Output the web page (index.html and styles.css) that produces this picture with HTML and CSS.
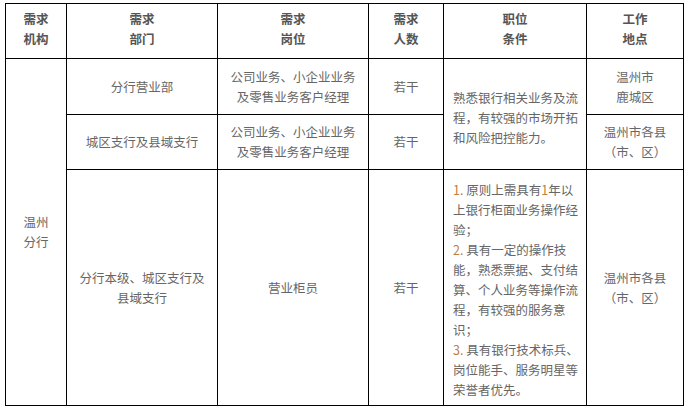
FILE: index.html
```html
<!DOCTYPE html>
<html lang="zh-CN">
<head>
<meta charset="utf-8">
<title>招聘岗位</title>
<link rel="stylesheet" href="styles.css">
</head>
<body>
<table class="jobs">
  <colgroup>
    <col class="c-org">
    <col class="c-dept">
    <col class="c-post">
    <col class="c-num">
    <col class="c-req">
    <col class="c-loc">
  </colgroup>
  <thead>
    <tr class="row-head">
      <th>需求<br>机构</th>
      <th>需求<br>部门</th>
      <th>需求<br>岗位</th>
      <th>需求<br>人数</th>
      <th>职位<br>条件</th>
      <th>工作<br>地点</th>
    </tr>
  </thead>
  <tbody>
    <tr class="row-a">
      <td rowspan="3">温州<br>分行</td>
      <td>分行营业部</td>
      <td>公司业务、小企业业务<br>及零售业务客户经理</td>
      <td>若干</td>
      <td rowspan="2" class="req">熟悉银行相关业务及流<br>程，有较强的市场开拓<br>和风险把控能力。</td>
      <td>温州市<br>鹿城区</td>
    </tr>
    <tr class="row-b">
      <td>城区支行及县域支行</td>
      <td>公司业务、小企业业务<br>及零售业务客户经理</td>
      <td>若干</td>
      <td>温州市各县<br>（市、区）</td>
    </tr>
    <tr class="row-c">
      <td>分行本级、城区支行及<br>县域支行</td>
      <td>营业柜员</td>
      <td>若干</td>
      <td class="req req-list"><span class="num">1.</span> 原则上需具有<span class="num">1</span>年以<br>上银行柜面业务操作经<br>验；<br><span class="num">2.</span> 具有一定的操作技<br>能，熟悉票据、支付结<br>算、个人业务等操作流<br>程，有较强的服务意<br>识；<br><span class="num">3.</span> 具有银行技术标兵、<br>岗位能手、服务明星等<br>荣誉者优先。</td>
      <td>温州市各县<br>（市、区）</td>
    </tr>
  </tbody>
</table>
</body>
</html>
```
FILE: styles.css
```css
html, body {
  margin: 0;
  padding: 0;
  background: #fff;
}
body {
  padding: 3px 0 0 5px;
  font-family: "Noto Sans CJK SC", "Liberation Sans", sans-serif;
  font-size: 12.5px;
  line-height: 20px;
  color: #666;
  text-spacing-trim: space-all;
}
.jobs {
  border-collapse: collapse;
  table-layout: fixed;
  width: 678px;
  border: 1px solid #000;
}
.c-org { width: 61px; }
.c-dept { width: 151px; }
.c-post { width: 151px; }
.c-num { width: 75px; }
.c-req { width: 143px; }
.c-loc { width: 97px; }
.jobs th,
.jobs td {
  border: 1px solid #000;
  padding: 0;
  text-align: center;
  vertical-align: middle;
  white-space: nowrap;
  font-weight: normal;
}
.jobs th {
  font-weight: bold;
  color: #555;
  padding-bottom: 4px;
}
.row-head { height: 55px; }
.row-a { height: 56px; }
.row-b { height: 55px; }
.row-c { height: 236px; }
.jobs td.req {
  text-align: left;
  padding-left: 9px;
  padding-top: 8px;
}
.jobs td.req-list {
  padding-top: 4px;
}
.num {
  color: #c08040;
}
```
